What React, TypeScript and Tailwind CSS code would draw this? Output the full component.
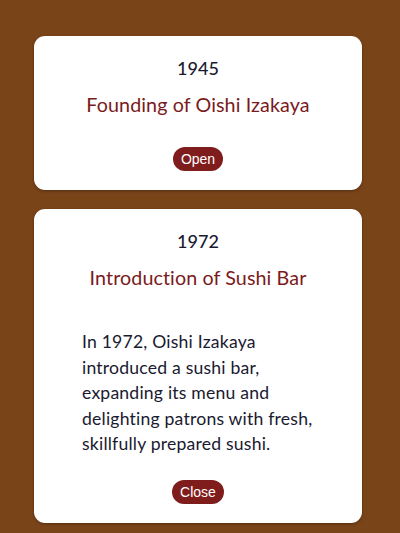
const events = [
  {
    year: "1945",
    title: "Founding of Oishi Izakaya",
    text: "",
    open: false,
  },
  {
    year: "1972",
    title: "Introduction of Sushi Bar",
    text: "In 1972, Oishi Izakaya introduced a sushi bar, expanding its menu and delighting patrons with fresh, skillfully prepared sushi.",
    open: true,
  },
];

export default function App() {
  return (
    <div className="min-h-[533px] bg-[#7a4419] pt-[36px] pb-[10px] font-['Lato',sans-serif]">
      <div className="ml-[34px] w-[328px] flex flex-col gap-[19px]">
        {events.map((ev) => (
          <div
            key={ev.year}
            className="bg-white rounded-[11px] shadow-[0_1px_3px_rgba(0,0,0,0.35)] px-6 pt-[18px] pb-[19px] flex flex-col items-center"
          >
            {/* Year */}
            <h3 className="text-[18px] leading-[28px] font-medium text-[#1a1a30]">{ev.year}</h3>

            {/* Title */}
            <h2 className="mt-[9px] text-[19.7px] leading-[28px] tracking-[0.1px] text-[#7a1a1c]">{ev.title}</h2>

            {ev.open && (
              <p className="mt-[37px] self-stretch px-6 text-[17.6px] leading-[25.5px] tracking-[0.2px] text-[#1a1a30]">
                {ev.text}
              </p>
            )}

            <button
              className={`${ev.open ? "mt-[23px]" : "mt-[28px]"} h-[24px] px-[8px] rounded-full bg-[#7f1d1d] text-white text-[14px] font-['Liberation_Sans',sans-serif] leading-[24px]`}
            >
              {ev.open ? "Close" : "Open"}
            </button>
          </div>
        ))}
      </div>
    </div>
  );
}
